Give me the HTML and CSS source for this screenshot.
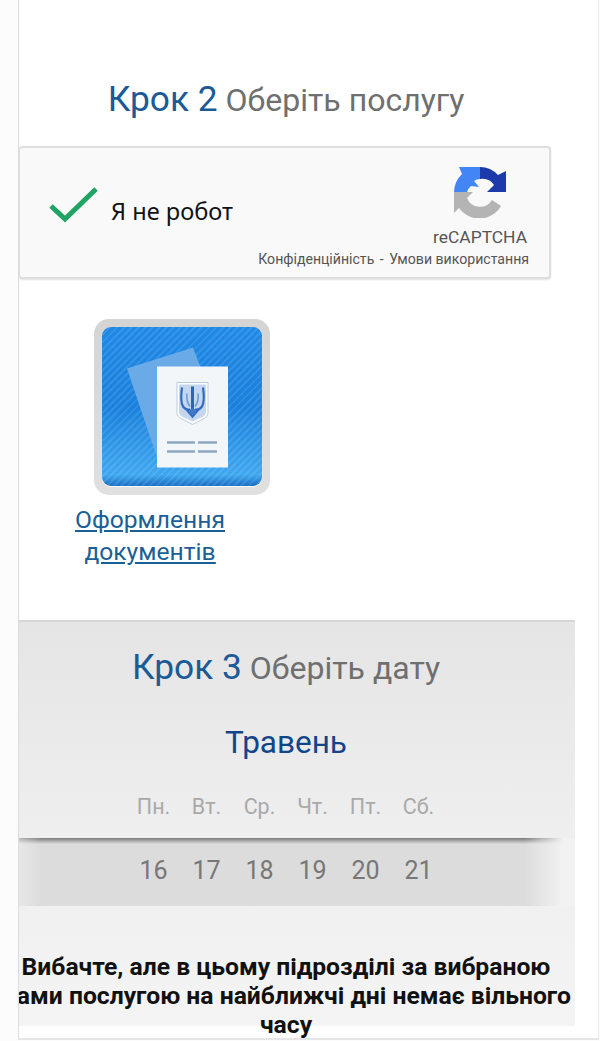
FILE: index.html
```html
<!DOCTYPE html>
<html lang="uk">
<head>
<meta charset="utf-8">
<title>Крок 2</title>
<link rel="stylesheet" href="styles.css">
</head>
<body>
<div class="frame">
  <section class="step-two">
    <h2 class="step-title"><span class="step-no">Крок 2</span> <span class="step-text">Оберіть послугу</span></h2>
    <div class="captcha">
      <svg class="check" viewBox="0 0 52 40"><path d="M3 21 L17 34 L48 4" fill="none" stroke="#1fa463" stroke-width="5"/></svg>
      <span class="captcha-label">Я не робот</span>
      <div class="captcha-brand">
        <svg class="recaptcha" viewBox="0 0 52 52">
          <path fill="#1c3aa9" d="M26 1 A25 25 0 0 1 44 9 L52 5 V26 H33 L40 19 A14 14 0 0 0 26 13 Z"/>
          <path fill="#4285f4" d="M0 26 A26 26 0 0 1 8 8 L5 1 H26 V13 A13 13 0 0 0 20 15 L25 21 L17 20 A13 13 0 0 0 13 26 Z"/>
          <path fill="#b4b4b4" d="M0 26 H19 L13 32 A14 14 0 0 0 38 34 L47 40 A25 25 0 0 1 5 42 L0 47 Z"/>
        </svg>
        <div class="brand-name">reCAPTCHA</div>
        <div class="brand-links">Конфіденційність <span class="dash">-</span> Умови використання</div>
      </div>
    </div>
    <a class="service" href="#">
      <span class="service-icon">
        <svg class="doc" viewBox="0 0 160 158">
          <polygon points="25,41 91,20 112,75 55,130" fill="#6aaae6"/>
          <rect x="55" y="39" width="71" height="101" fill="#f3f6f9"/>
          <path d="M75 55 H106 V85 Q106 90 100 92 L90.500 97 L81 92 Q75 90 75 85 Z" fill="#fff" stroke="#b9cbe0" stroke-width="1"/>
          <path d="M77 57 H104 V84 Q104 88 99 90 L90.500 94 L82 90 Q77 88 77 84 Z" fill="#c4d7ee"/>
          <path d="M80 60 Q78 74 81 79 Q84 83 88 82 M101 60 Q103 74 100 79 Q97 83 93 82 M84.500 82 L90.500 89 L96.500 82" fill="none" stroke="#2f6bbf" stroke-width="2.200"/>
          <path d="M85 66 Q84 74 88 79 M96 66 Q97 74 93 79" fill="none" stroke="#6f9bd4" stroke-width="1.600"/>
          <path d="M90.500 59 V82" fill="none" stroke="#2a64b8" stroke-width="3"/>
          <circle cx="90.500" cy="84" r="3" fill="#3f78c6"/>
          <path d="M65 115 H93 M96 115 H115 M65 124 H93 M96 124 H115" stroke="#8ea7c0" stroke-width="2.500"/>
        </svg>
      </span>
      <span class="service-name">Оформлення<br>документів</span>
    </a>
  </section>
  <section class="step-three">
    <h2 class="step-title date-title"><span class="step-no">Крок 3</span> <span class="step-text">Оберіть дату</span></h2>
    <div class="month">Травень</div>
    <div class="week"><span>Пн.</span><span>Вт.</span><span>Ср.</span><span>Чт.</span><span>Пт.</span><span>Сб.</span></div>
    <div class="days"><span>16</span><span>17</span><span>18</span><span>19</span><span>20</span><span>21</span></div>
    <p class="notice">Вибачте, але в цьому підрозділі за вибраною<br>Вами послугою на найближчі дні немає вільного<br>часу</p>
  </section>
</div>
</body>
</html>
```
FILE: styles.css
```css
* { box-sizing: border-box; }
html, body { margin: 0; height: 1041px; overflow: hidden; background: #fcfcfc; }
body { font-family: Roboto, "Noto Sans", sans-serif; }
.frame {
  position: relative;
  margin-left: 18px;
  width: 581px;
  height: 1040px;
  background: #fff;
  border-left: 1px solid #dcdcdc;
  border-right: 1px solid #ececec;
  border-bottom: 2px solid #e6e6e6;
  overflow: hidden;
}
.step-two { height: 620px; padding-top: 77px; width: 556px; }
.step-title {
  margin: 0;
  width: 534px;
  text-align: center;
  font-weight: 400;
  font-size: 32px;
  line-height: 44px;
  white-space: nowrap;
}
.step-no { color: #1c5a96; font-size: 35.300px; }
.step-text { color: #6f6f6f; }
.captcha {
  margin-top: 24px;
  width: 532px;
  height: 133px;
  display: flex;
  align-items: center;
  position: relative;
  background: #f9f9f9;
  border: 2px solid #dedede;
  border-left-width: 1px;
  border-radius: 4px;
  box-shadow: 0 1px 2px rgba(0,0,0,.12);
}
.check { width: 52px; height: 40px; margin-left: 28px; margin-top: -15px; }
.captcha-label { margin-left: 11px; margin-top: -3px; font-size: 23.600px; color: #111; font-family: "Noto Sans", sans-serif; }
.captcha-brand {
  position: absolute;
  right: 20px;
  top: 18px;
  display: flex;
  flex-direction: column;
  align-items: flex-end;
}
.recaptcha { width: 52px; height: 52px; margin-right: 23px; }
.brand-name { margin-top: 9px; font-size: 17.400px; line-height: 20px; color: #555; margin-right: 2px; }
.brand-links { margin-top: 2px; font-size: 14.100px; line-height: 20px; color: #555; white-space: nowrap; }
.dash { margin: 0 2px; }
.service {
  display: flex;
  flex-direction: column;
  align-items: center;
  width: 176px;
  margin: 40px 0 0 75px;
  color: #1a5f95;
}
.service-icon {
  display: block;
  flex: none;
  width: 176px;
  height: 176px;
  padding: 8px 8px 9px 8px;
  border-radius: 15px;
  background: linear-gradient(#d4d4d4, #e0e0e0);
}
.doc {
  display: block;
  width: 160px;
  height: 159px;
  border-radius: 9px;
  box-shadow: 0 1px 1px #fff;
  background:
    repeating-linear-gradient(135deg, rgba(255,255,255,.1) 0 2px, rgba(255,255,255,0) 2px 5px),
    linear-gradient(#1f8ae6, #1a80dc 50%, #3fa8f0 93%, #1a6fc4);
}
.service-name {
  display: block;
  margin: 9px 64px 0 0;
  font-size: 24.600px;
  line-height: 32px;
  text-align: center;
  text-decoration: underline;
  white-space: nowrap;
}
.step-three {
  width: 556px;
  height: 406px;
  border-top: 2px solid #d6d6d6;
  background: linear-gradient(#e5e5e5, #eeeeee 50%, #f4f4f4);
}
.date-title { padding-top: 23px; height: 67px; }
.month {
  width: 534px;
  margin-top: 32px;
  text-align: center;
  font-size: 31.500px;
  line-height: 44px;
  color: #11458a;
}
.week, .days {
  display: flex;
  justify-content: center;
  width: 534px;
}
.week span, .days span { width: 53px; text-align: center; }
.week { margin-top: 27px; font-size: 21.500px; line-height: 30px; color: #a9a9a9; }
.days {
  width: 556px;
  height: 68px;
  margin-top: 16px;
  padding: 0 22px 4px 0;
  align-items: center;
  font-size: 25px;
  color: #777;
  background:
    linear-gradient(90deg, rgba(242,242,242,.5), rgba(242,242,242,0) 4%, rgba(242,242,242,0) 91%, #f2f2f2 98%),
    linear-gradient(#7a7a7a, rgba(122,122,122,0)) 0 0 / 100% 6px no-repeat,
    #dcdcdc;
}
.notice {
  margin: 0 0 0 -19px;
  padding: 46px 38px 0 0;
  width: 610px;
  text-align: center;
  font-weight: 700;
  font-size: 24.700px;
  line-height: 29px;
  color: #111;
  white-space: nowrap;
}
```
